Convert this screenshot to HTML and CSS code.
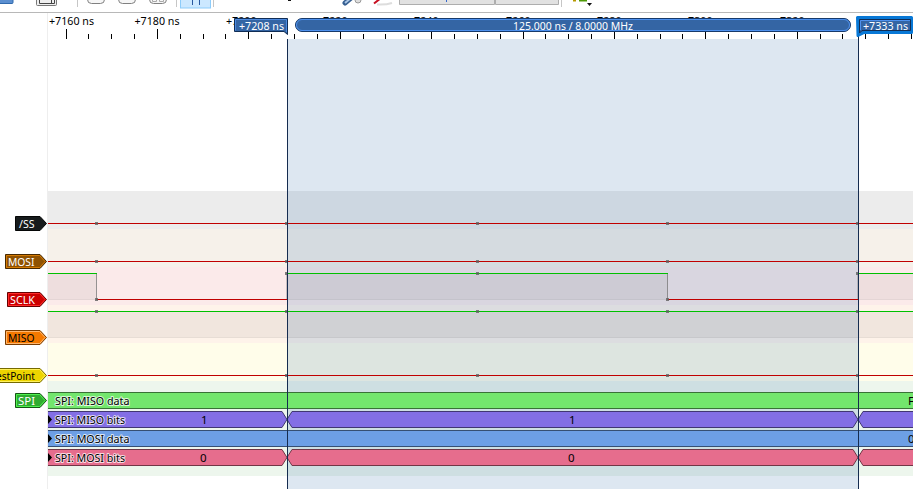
FILE: index.html
```html
<!DOCTYPE html>
<html lang="en">
<head>
<meta charset="utf-8">
<title>Logic trace</title>
<link rel="stylesheet" href="styles.css">
</head>
<body>
<header class="toolbar">
<svg width="913" height="13" viewBox="0 0 913 13">
<rect x="-4" y="-8" width="17" height="11.500" rx="1" fill="#5b8fd0" stroke="#2f69ad"/>
<rect x="36.500" y="-8" width="20" height="13.500" rx="1" fill="#eee" stroke="#777"/><path d="M39.500 0V3.500H54.500V0M51.500 0V3" fill="none" stroke="#444"/>
<g fill="#f6f6f6" stroke="#808080"><rect x="87.500" y="-9" width="17" height="12.500" rx="4"/><rect x="118.500" y="-9" width="17" height="12.500" rx="4"/><rect x="149.500" y="-9" width="17" height="12.500" rx="4"/></g>
<path d="M152.500 0V1.500H156.500V0M159.500 0V1.500H163.500V0" fill="none" stroke="#aaa"/>
<path d="M77.500 0V7M176.500 0V7M213.500 0V7M561.500 0V7" stroke="#c6c6c6"/>
<rect x="180.500" y="-5" width="30" height="13" fill="#cce8ff" stroke="#8dccfa"/>
<path d="M192.500 0V5M199.500 0V5" stroke="#2858a0"/>
<path d="M288 0H291" stroke="#111" stroke-width="2"/>
<path d="M351 -2L345 3" stroke="#365f91" stroke-width="5" stroke-linecap="round"/><path d="M351 -2L345 3" stroke="#a9c5e5" stroke-width="2"/><circle cx="358" cy="0" r="3" fill="#ddd" stroke="#999"/>
<path d="M374 3.500L381 -2" stroke="#c70f21" stroke-width="2"/><path d="M377 4.500Q386 5 392 3" stroke="#ddd" stroke-width="2" fill="none"/>
<path d="M399.500 0V4.500H494.500V0M495.500 0V4.500H558.500V0" fill="#e1e1e1" stroke="#adadad"/><path d="M446.500 0V2" stroke="#36c"/>
<path d="M573 0.500H576" stroke="#b79900" stroke-width="2"/><path d="M579 0H587" stroke="#4e9a06" stroke-width="3"/><path d="M587 3H592L589.500 6Z" fill="#111"/>
</svg>
</header>
<main class="viewer">
<aside class="names">
<svg width="48" height="476" viewBox="0 13 48 476" class="txt">
<g stroke-width="1">
<path d="M15.500 216.500H40L46.500 223.500L40 230.500H15.500Z" fill="#171b1c" stroke="#050606"/>
<path d="M5.500 254.500H40L46.500 261.500L40 268.500H5.500Z" fill="#8f5202" stroke="#482900"/><path d="M6.500 255.500H39.600L45 261.500L39.600 267.500H6.500Z" fill="none" stroke="#d57a03"/>
<path d="M7.500 292.500H40L46.500 299.500L40 306.500H7.500Z" fill="#cc0000" stroke="#660000"/><path d="M8.500 293.500H39.600L45 299.500L39.600 305.500H8.500Z" fill="none" stroke="#ff2c2c"/>
<path d="M5.500 330.500H40L46.500 337.500L40 344.500H5.500Z" fill="#f57900" stroke="#7a3c00"/><path d="M6.500 331.500H39.600L45 337.500L39.600 343.500H6.500Z" fill="none" stroke="#ffb66d"/>
<path d="M-5 368.500H40L46.500 375.500L40 382.500H-5Z" fill="#edd400" stroke="#766a00"/><path d="M-5 369.500H39.600L45 375.500L39.600 381.500H-5Z" fill="none" stroke="#fff05a"/>
<path d="M15.500 393.500H40L46.500 400.500L40 407.500H15.500Z" fill="#30ab30" stroke="#165516"/><path d="M16.500 394.500H39.600L45 400.500L39.600 406.500H16.500Z" fill="none" stroke="#4ef24e"/>
</g>
<g fill="#fff"><text x="19" y="228" textLength="15.500">/SS</text><text x="8" y="266" textLength="26.500">MOSI</text><text x="10" y="304" textLength="25">SCLK</text><text x="18" y="405" textLength="17">SPI</text></g>
<text x="8" y="342" textLength="26.500">MISO</text><text x="-9" y="380" textLength="44">TestPoint</text>
</svg>
</aside>
<section class="plot">
<div class="ruler"></div>
<div class="blank"></div>
<div class="lane ss"></div>
<div class="lane mosi"></div>
<div class="lane sclk"></div>
<div class="lane miso"></div>
<div class="lane test"></div>
<div class="lane spi"></div>
<div class="selection"></div>
<svg class="signals txt" width="865" height="476" viewBox="48 13 865 476">
<g id="ticks" stroke="#000"></g>
<text x="49" y="25" textLength="45">+7160 ns</text><text x="134.500" y="25" textLength="45">+7180 ns</text><text x="226" y="25" textLength="45">+7200 ns</text>
<text x="317" y="25" textLength="45">+7220 ns</text><text x="408" y="25" textLength="45">+7240 ns</text><text x="500" y="25" textLength="45">+7260 ns</text><text x="591" y="25" textLength="45">+7280 ns</text><text x="682" y="25" textLength="45">+7300 ns</text><text x="774" y="25" textLength="45">+7320 ns</text>
<g fill="#000" fill-opacity=".05"><path d="M48 273H97V300H48ZM287 273H668V300H287ZM859 273H913V300H859ZM48 311H913V338H48Z"/></g>
<path d="M48 299.500H97M287 299.500H668M859 299.500H913M48 337.500H913" stroke="#000" stroke-opacity=".04"/>
<path d="M96.500 273V300M287 273V300M667.500 273V300M858 273V300" stroke="#777" stroke-opacity=".75"/>
<path d="M48 223.500H913M48 261.500H913M97 299.500H287M668 299.500H858M48 375.500H913" stroke="#c00000"/>
<path d="M48 273.500H97M287 273.500H668M859 273.500H913M48 311.500H913" stroke="#00c000"/>
<g id="samples" fill="#606060" fill-opacity=".8"></g>
<g id="bits"></g>
<path d="M287.500 39V489M858.500 36V489" stroke="#152c50"/>
<path d="M48 415L52 419.500L48 424ZM48 434L52 438.500L48 443ZM48 453L52 457.500L48 462Z"/>
<g class="halo"><text x="55" y="405" textLength="74.500">SPI: MISO data</text><text x="55" y="424" textLength="70">SPI: MISO bits</text><text x="55" y="443" textLength="74.500">SPI: MOSI data</text><text x="55" y="462" textLength="70">SPI: MOSI bits</text></g>
<text x="201" y="424">1</text><text x="569" y="424">1</text><text x="200" y="462">0</text><text x="568" y="462">0</text><text x="908" y="405">F</text><text x="908" y="443">0</text>
<path d="M234.500 18.500H287.500V34.500L284 31.500H234.500Z" fill="#3465a4" stroke="#102d55"/><path d="M235.500 30.500V19.500H286.500V32" fill="none" stroke="#4e8be0"/>
<rect x="295.500" y="18.500" width="555" height="13" rx="6.500" fill="#3465a4" stroke="#173a6b"/><rect x="296.500" y="19.500" width="553" height="11" rx="5.500" fill="none" stroke="#4e91ee"/>
<path d="M857.500 17.500H911.500V32.500H864L858 35.500Z" fill="#3465a4" stroke="#0878d6" stroke-width="3" stroke-linejoin="round"/><path d="M859.500 19.500H910.500V30.500H862L859.500 33Z" fill="none" stroke="#102d55"/><path d="M860.500 30V20.500H910" fill="none" stroke="#4e91ee"/>
<g fill="#fff"><text x="239" y="30" textLength="45">+7208 ns</text><text x="513" y="30" textLength="120">125.000 ns / 8.0000 MHz</text><text x="863" y="30" textLength="45">+7333 ns</text></g>
</svg>
</section>
</main>
<script src="plot.js"></script>
</body>
</html>
```
FILE: styles.css
```css
body { margin: 0; width: 913px; height: 489px; overflow: hidden; background: #fff; font-family: "Noto Sans", sans-serif; }
.toolbar { box-sizing: border-box; height: 13px; border-bottom: 1px solid #b8b8b8; overflow: hidden; }
svg { display: block; }
.viewer { display: flex; height: 476px; }
.names { width: 48px; box-sizing: border-box; border-right: 1px solid #eee; }
.plot { position: relative; flex: 1; display: flex; flex-direction: column; }
.ruler { height: 26px; }
.blank { height: 152px; }
.lane { height: 38px; }
.ss { background: #ececec; }
.mosi { background: #f6f1ea; }
.sclk { background: #fbeaea; }
.miso { background: #fef3ea; }
.test { background: #fffdea; }
.spi { height: 95px; background: #edf6ed; }
.selection { position: absolute; left: 240px; top: 26px; width: 570px; bottom: 0; background: rgba(86, 134, 184, .2); }
.signals { position: absolute; left: 0; top: 0; }
.txt { font-family: "Noto Sans", sans-serif; font-size: 11.500px; }
.halo { paint-order: stroke; stroke: rgba(255, 255, 255, .75); stroke-width: 2px; stroke-linejoin: round; }
```
FILE: plot.js
```js
const ns = "http://www.w3.org/2000/svg";
function add(parent, tag, attrs) {
  const node = document.createElementNS(ns, tag);
  for (const key in attrs) node.setAttribute(key, attrs[key]);
  document.getElementById(parent).append(node);
}
document.querySelectorAll("text[textLength]").forEach(t => t.setAttribute("lengthAdjust", "spacingAndGlyphs"));
for (let i = 0; i < 38; i++) {
  const x = Math.floor(66 + i * 22.85) + .5;
  add("ticks", "path", { d: `M${x} ${i % 4 ? 34 : i < 8 ? 29 : 32}V39` });
}
for (const x of [96, 286, 477, 667, 857]) {
  for (const y of [223, 261, x === 96 || x === 667 ? 299 : 273, 311, 375]) {
    add("samples", "rect", { x: x - 1, y: y - 1, width: 3, height: 3 });
  }
}
function band(y, fill, stroke, split) {
  const spans = split ? [[40, 287], [287, 858], [858, 925]] : [[40, 925]];
  for (const [a, b] of spans) {
    const d = split ? `M${a} ${y + 8}L${a + 5} ${y}H${b - 5}L${b} ${y + 8}L${b - 5} ${y + 16}H${a + 5}Z` : `M${a} ${y}H${b}V${y + 16}H${a}Z`;
    add("bits", "path", { d, fill, stroke });
  }
}
band(392.5, "#73e66d", "#397236", false);
band(411.5, "#836fe5", "#413772", true);
band(430.5, "#6d9fe5", "#364f72", false);
band(449.5, "#e66d8d", "#723646", true);
```
